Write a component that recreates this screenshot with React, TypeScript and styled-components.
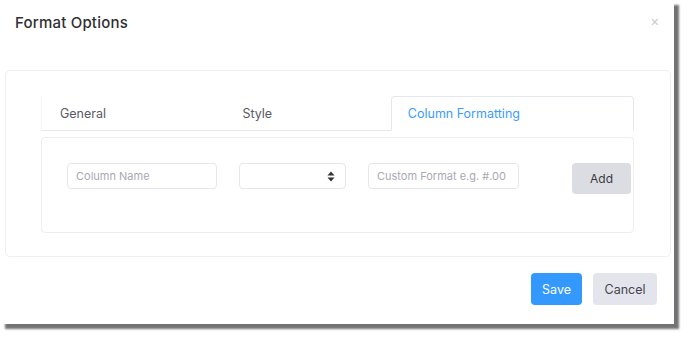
import React, { useState } from 'react';
import styled, { createGlobalStyle } from 'styled-components';

const GlobalStyle = createGlobalStyle`
  html, body {
    min-height: 100vh;
  }
  body {
    margin: 0;
    background: #ffffff;
    font-family: Inter, 'Noto Sans', sans-serif;
  }
`;

const Dialog = styled.div`
  width: 674px;
  height: 324px;
  background: #ffffff;
  box-shadow: 5px 5px 2px rgba(0, 0, 0, 0.55);
  display: flex;
  flex-direction: column;
`;

const Header = styled.div`
  display: flex;
  justify-content: space-between;
  align-items: center;
  height: 44px;
  padding: 0 15px 0 15px;
`;

const Title = styled.h2`
  margin: 0;
  font-size: 15px;
  font-weight: 500;
  color: #2f2f33;
  letter-spacing: 0.2px;
`;

const CloseButton = styled.button`
  border: none;
  background: none;
  padding: 0;
  color: #c8c8cc;
  font-size: 14px;
  line-height: 1;
  cursor: pointer;
`;

const Panel = styled.div`
  margin: 26px 3px 0 5px;
  height: 187px;
  border: 1px solid #eeeef3;
  border-radius: 5px;
  padding: 25px 36px 0 35px;
  box-sizing: border-box;
`;

const TabList = styled.div`
  display: flex;
  height: 34px;
  border-bottom: 1px solid #e6e6ee;
  border-left: 1px solid #f6f6f8;
`;

const Tab = styled.div<{ $active?: boolean; $width: number }>`
  width: ${p => p.$width}px;
  box-sizing: border-box;
  display: flex;
  align-items: center;
  padding-left: ${p => (p.$active ? 16 : 18)}px;
  font-size: 12.5px;
  color: ${p => (p.$active ? '#3a9bff' : '#5a5a66')};
  background: #ffffff;
  ${p =>
    p.$active &&
    `
    border: 1px solid #e6e6ee;
    border-bottom: 1px solid #ffffff;
    border-radius: 4px 4px 0 0;
    margin-bottom: -1px;
    height: 35px;
  `}
`;

const TabBody = styled.div`
  margin-top: 6px;
  height: 96px;
  border: 1px solid #ededf2;
  border-radius: 4px;
  box-sizing: border-box;
  padding: 25px 2px 0 25px;
  display: flex;
  align-items: flex-start;
`;

const TextField = styled.input<{ $width: number }>`
  width: ${p => p.$width}px;
  height: 26px;
  box-sizing: border-box;
  border: 1px solid #e6e6ee;
  border-radius: 4px;
  padding: 0 8px;
  font-family: inherit;
  font-size: 11px;
  color: #444;
  outline: none;
  &::placeholder {
    color: #a9a9b3;
  }
`;

const SelectBox = styled.div`
  width: 107px;
  height: 26px;
  box-sizing: border-box;
  border: 1px solid #e6e6ee;
  border-radius: 4px;
  margin: 0 22px;
  display: flex;
  align-items: center;
  justify-content: flex-end;
  padding-right: 10px;
`;

const AddButton = styled.button`
  margin-left: auto;
  width: 59px;
  height: 31px;
  border: none;
  border-radius: 4px;
  background: #dcdde3;
  color: #3a3a44;
  font-family: inherit;
  font-size: 12px;
  cursor: pointer;
`;

const Footer = styled.div`
  display: flex;
  justify-content: flex-end;
  gap: 11px;
  padding: 16px 17px 0 0;
`;

const FooterButton = styled.button<{ $primary?: boolean; $width: number }>`
  width: ${p => p.$width}px;
  height: 32px;
  padding: 0;
  border: none;
  border-radius: 4px;
  background: ${p => (p.$primary ? '#3399ff' : '#e4e5ec')};
  color: ${p => (p.$primary ? '#ffffff' : '#44444e')};
  font-family: inherit;
  font-size: 12.5px;
  cursor: pointer;
`;

const SortIcon = () => (
  <svg width='8' height='11' viewBox='0 0 8 11'>
    <path d='M4 0.5 L7.5 4.5 H0.5 Z' fill='#333' />
    <path d='M4 10.5 L7.5 6.5 H0.5 Z' fill='#333' />
  </svg>
);

const tabs = [
  { label: 'General', width: 183 },
  { label: 'Style', width: 167 },
  { label: 'Column Formatting', width: 244 },
];

export default function App() {
  const [active, setActive] = useState('Column Formatting');

  return (
    <>
      <GlobalStyle />
      <Dialog>
        <Header>
          <Title>Format Options</Title>
          <CloseButton>×</CloseButton>
        </Header>
        <Panel>
          <TabList>
            {tabs.map(tab => (
              <Tab
                key={tab.label}
                $width={tab.width}
                $active={tab.label === active}
                onClick={() => setActive(tab.label)}
              >
                {tab.label}
              </Tab>
            ))}
          </TabList>
          <TabBody>
            <TextField $width={150} placeholder='Column Name' />
            <SelectBox>
              <SortIcon />
            </SelectBox>
            <TextField $width={151} placeholder='Custom Format e.g. #.00' />
            <AddButton>Add</AddButton>
          </TabBody>
        </Panel>
        <Footer>
          <FooterButton $primary $width={51}>Save</FooterButton>
          <FooterButton $width={64}>Cancel</FooterButton>
        </Footer>
      </Dialog>
    </>
  );
}
